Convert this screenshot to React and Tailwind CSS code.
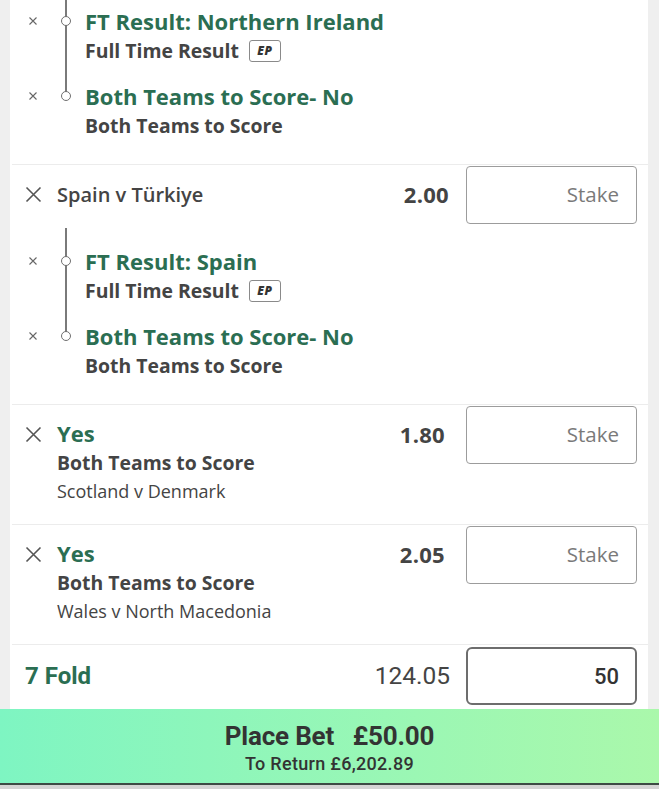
import React from "react";

const GREEN = "text-[#2b6e52]";

function SmallX() {
  return (
    <svg width="10" height="10" viewBox="0 0 10 10" className="block">
      <path d="M1.5 1.5 L8.5 8.5 M8.5 1.5 L1.5 8.5" stroke="#666" strokeWidth="1.1" fill="none" />
    </svg>
  );
}

function BigX() {
  return (
    <svg width="17" height="17" viewBox="0 0 17 17" className="block">
      <path d="M1.5 1.5 L15.5 15.5 M15.5 1.5 L1.5 15.5" stroke="#555" strokeWidth="1.6" fill="none" />
    </svg>
  );
}

function EP() {
  return (
    <span className="ml-[10px] inline-flex h-[22px] w-[32px] items-center justify-center rounded-[3px] border border-[#8a8a8a] text-[12px] font-extrabold italic text-[#333] tracking-[0.5px]">
      EP
    </span>
  );
}

function Leg({ title, sub, ep }) {
  return (
    <div className="flex h-[75px]">
      <div className="flex h-[30px] w-[47px] items-center pl-[18px]">
        <SmallX />
      </div>
      <div className="w-[28px]">
        <div className="relative z-10 mt-[10px] ml-[4px] h-[10px] w-[10px] rounded-full border-[1.5px] border-[#6f6f6f] bg-white" />
      </div>
      <div className="flex flex-col">
        <div className={`h-[30px] leading-[30px] text-[22px] font-bold ${GREEN}`}>{title}</div>
        <div className="flex h-[29px] items-center text-[19.4px] font-bold text-[#444]">
          <span>{sub}</span>
          {ep && <EP />}
        </div>
      </div>
    </div>
  );
}

function Legs({ legs, lineTop }) {
  return (
    <div className="relative">
      <div className={`absolute left-[55px] w-[1.5px] bg-[#7a7a7a] ${lineTop} bottom-[60px]`} />
      {legs.map((l, i) => (
        <Leg key={i} {...l} />
      ))}
    </div>
  );
}

function StakeBox({ value }) {
  if (value) {
    return (
      <div className="flex h-[58px] w-[171px] items-center justify-end rounded-[6px] border-2 border-[#6d6d6d] pr-[16px] font-['Roboto',sans-serif] text-[22px] font-medium text-[#333]">
        {value}
      </div>
    );
  }
  return (
    <div className="flex h-[58px] w-[171px] items-center justify-end rounded-[4px] border border-[#9c9c9c] pr-[17px] text-[20.5px] text-[#7a7a7a]">
      Stake
    </div>
  );
}

function Divider() {
  return <div className="ml-[2px] h-px bg-[#ececec]" />;
}

export default function App() {
  return (
    <div className="flex h-[789px] w-[659px] flex-col overflow-hidden bg-[#efefef] font-['Open_Sans',sans-serif]">
      <div className="flex h-[709px] shrink-0">
        <div className="w-[10px] bg-[#efefef]" />
        <div className="flex flex-1 flex-col bg-white">
          {/* top legs (continuation) */}
          <div className="h-[164px] pt-[6px]">
            <Legs
              lineTop="top-[-6px]"
              legs={[
                { title: "FT Result: Northern Ireland", sub: "Full Time Result", ep: true },
                { title: "Both Teams to Score- No", sub: "Both Teams to Score" },
              ]}
            />
          </div>
          <Divider />
          {/* Spain v Türkiye */}
          <div className="h-[239px]">
            <div className="flex h-[59px] items-center">
              <div className="flex w-[47px] justify-center">
                <BigX />
              </div>
              <div className="flex-1 text-[20px] font-semibold text-[#444]">Spain v Türkiye</div>
              <div className="mr-[17px] text-[22px] font-bold tracking-[0.3px] text-[#444]">2.00</div>
              <StakeBox />
              <div className="w-[11px]" />
            </div>
            <div className="pt-[22px]">
              <Legs
                lineTop="top-[-18px]"
                legs={[
                  { title: "FT Result: Spain", sub: "Full Time Result", ep: true },
                  { title: "Both Teams to Score- No", sub: "Both Teams to Score" },
                ]}
              />
            </div>
          </div>
          <Divider />
          {/* Yes rows */}
          {[
            { odds: "1.80", match: "Scotland v Denmark" },
            { odds: "2.05", match: "Wales v North Macedonia" },
          ].map((r, i) => (
            <React.Fragment key={i}>
              <div className="flex h-[119px]">
                <div className="flex w-[47px] justify-center pt-[21px]">
                  <BigX />
                </div>
                <div className="flex flex-1 flex-col pt-[13px]">
                  <div className={`h-[30px] leading-[30px] text-[22px] font-bold ${GREEN}`}>Yes</div>
                  <div className="h-[29px] leading-[29px] text-[19.4px] font-bold text-[#444]">Both Teams to Score</div>
                  <div className="h-[28px] leading-[28px] text-[18px] text-[#444]">{r.match}</div>
                </div>
                <div className="flex h-[59px] items-center">
                  <div className="mr-[21px] text-[22px] font-bold tracking-[0.3px] text-[#444]">{r.odds}</div>
                  <StakeBox />
                  <div className="w-[11px]" />
                </div>
              </div>
              <Divider />
            </React.Fragment>
          ))}
          {/* 7 Fold */}
          <div className="flex h-[64px] items-start pt-[1px]">
            <div className={`flex h-[60px] flex-1 items-center pl-[15px] font-['Roboto',sans-serif] text-[24px] font-bold ${GREEN}`}>
              7 Fold
            </div>
            <div className="flex h-[60px] items-center">
              <div className="mr-[16px] font-['Roboto',sans-serif] text-[24.5px] text-[#444]">124.05</div>
              <StakeBox value="50" />
              <div className="w-[11px]" />
            </div>
          </div>
        </div>
        <div className="w-[11px] bg-[#efefef]" />
      </div>
      {/* Place bet bar */}
      <div className="flex h-[74px] shrink-0 flex-col items-center justify-center gap-[2px] bg-gradient-to-r from-[#7ef5c2] to-[#aaf8ab] pt-[3px] font-['Roboto',sans-serif] text-[#333]">
        <div className="text-[26px] font-bold leading-[30px] tracking-[-0.2px]">
          Place Bet&nbsp;&nbsp;&nbsp;£50.00
        </div>
        <div className="text-[18px] font-medium leading-[22px] tracking-[0.3px]">To Return £6,202.89</div>
      </div>
      <div className="h-[2px] shrink-0 bg-[#3d4a44]" />
      <div className="flex-1 bg-[#d4d4d4]" />
    </div>
  );
}
